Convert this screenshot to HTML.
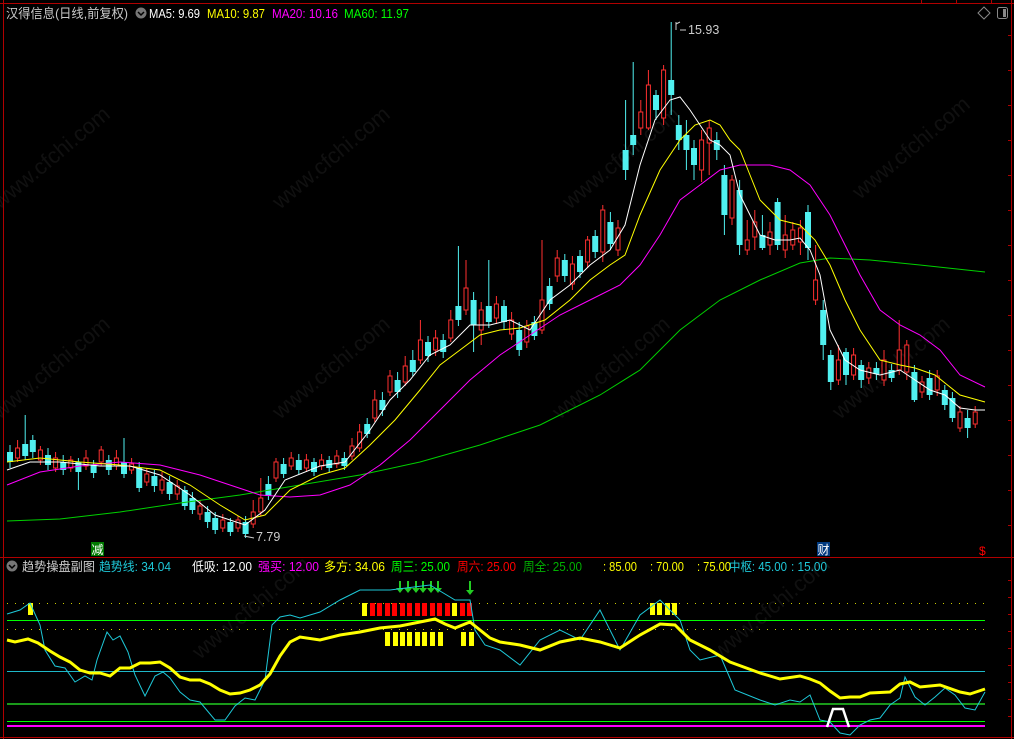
<!DOCTYPE html>
<html><head><meta charset="utf-8"><style>
html,body{margin:0;padding:0;background:#000;width:1014px;height:739px;overflow:hidden}
svg{display:block}
text{font-family:"Liberation Sans","Noto Sans CJK SC",sans-serif;font-size:12.5px}
</style></head><body>
<svg width="1014" height="739" xmlns="http://www.w3.org/2000/svg">
<rect width="1014" height="739" fill="#000"/>
<g fill="#101010">
<text x="0" y="210" transform="rotate(-40 0 210)" style="font-size:22px">www.cfchi.com</text>
<text x="280" y="210" transform="rotate(-40 280 210)" style="font-size:22px">www.cfchi.com</text>
<text x="570" y="210" transform="rotate(-40 570 210)" style="font-size:22px">www.cfchi.com</text>
<text x="860" y="200" transform="rotate(-40 860 200)" style="font-size:22px">www.cfchi.com</text>
<text x="0" y="420" transform="rotate(-40 0 420)" style="font-size:22px">www.cfchi.com</text>
<text x="280" y="420" transform="rotate(-40 280 420)" style="font-size:22px">www.cfchi.com</text>
<text x="560" y="420" transform="rotate(-40 560 420)" style="font-size:22px">www.cfchi.com</text>
<text x="840" y="420" transform="rotate(-40 840 420)" style="font-size:22px">www.cfchi.com</text>
<text x="200" y="660" transform="rotate(-40 200 660)" style="font-size:22px">www.cfchi.com</text>
<text x="720" y="660" transform="rotate(-40 720 660)" style="font-size:22px">www.cfchi.com</text>
</g>
<line x1="3.5" y1="0" x2="3.5" y2="739" stroke="#b00000"/>
<line x1="0" y1="3.5" x2="1014" y2="3.5" stroke="#b00000"/>
<line x1="1011.5" y1="0" x2="1011.5" y2="739" stroke="#b00000"/>
<line x1="0" y1="557.5" x2="1014" y2="557.5" stroke="#b00000"/>
<line x1="0" y1="737.5" x2="1014" y2="737.5" stroke="#b00000"/>
<path stroke="#b00000" d="M921.5 0V3M956.5 0V3M991.5 0V3M1008 35.5h3M1008 70.5h3M1008 105.5h3M1008 140.5h3M1008 175.5h3M1008 210.5h3M1008 245.5h3M1008 280.5h3M1008 315.5h3M1008 350.5h3M1008 385.5h3M1008 420.5h3M1008 455.5h3M1008 490.5h3M1008 525.5h3M1008 580.5h3M1008 597.5h3M1008 614.5h3M1008 631.5h3M1008 648.5h3M1008 665.5h3M1008 682.5h3M1008 699.5h3M1008 716.5h3"/>
<path d="M984 7 L990 13 L984 19 L978 13 Z" fill="none" stroke="#888"/>
<rect x="997.5" y="7.5" width="10" height="11" rx="2" fill="none" stroke="#888"/>
<rect x="1003" y="9" width="3" height="8" fill="#888"/>
<text x="6" y="18" fill="#c8c8c8" style="font-size:13px" textLength="122" lengthAdjust="spacingAndGlyphs">汉得信息(日线,前复权)</text>
<circle cx="141" cy="13" r="5.5" fill="#777"/><path d="M138 12 L141 15 L144 12" stroke="#000" stroke-width="1.5" fill="none"/>
<text x="149" y="18" fill="#fff" style="font-size:13px" textLength="51" lengthAdjust="spacingAndGlyphs">MA5: 9.69</text>
<text x="207" y="18" fill="#ff0" style="font-size:13px" textLength="58" lengthAdjust="spacingAndGlyphs">MA10: 9.87</text>
<text x="272" y="18" fill="#f0f" style="font-size:13px" textLength="66" lengthAdjust="spacingAndGlyphs">MA20: 10.16</text>
<text x="344" y="18" fill="#0f0" style="font-size:13px" textLength="65" lengthAdjust="spacingAndGlyphs">MA60: 11.97</text>

<g fill="#50f0f0" stroke="#50f0f0">
<path fill="none" d="M10 445V468M25.2 415V460M32.8 435V458M48 448V470M63.2 455V475M78.4 458V490M93.6 460V478M108.8 455V475M124 438V478M139.2 462V492M154.4 470V492M169.6 476V500M184.8 486V510M192.4 492V514M207.6 506V528M215.2 512V534M230.4 518V536M245.6 516V538M268.4 476V500M283.6 458V478M298.8 454V474M314 458V476M329.2 456V472M344.4 452V470M367.2 418V438M382.4 392V416M397.6 372V398M412.8 350V376M428 336V362M443.2 334V358M458.4 246V326M473.6 292V352M488.8 260V328M504 300V330M519.2 322V356M534.4 316V340M549.6 278V310M564.8 254V282M580 250V278M595.2 230V258M610.4 212V250M625.6 100V180M633.2 62V155M656 90V120M671.2 22V115M678.8 115V150M686.4 120V170M694 140V180M716.8 132V160M724.4 165V235M739.6 180V255M762.4 215V250M777.6 198V250M808 205V260M823.2 300V360M830.8 350V390M846 348V385M861.2 360V388M876.4 362V380M891.6 364V382M914.4 365V402M929.6 370V400M944.8 385V410M952.4 392V422M967.6 410V438"/>
<g stroke="none">
<rect x="7" y="452" width="6" height="10"/><rect x="22.2" y="444" width="6" height="12"/><rect x="29.8" y="440" width="6" height="12"/><rect x="45" y="455" width="6" height="10"/><rect x="60.2" y="462" width="6" height="8"/><rect x="75.4" y="462" width="6" height="10"/><rect x="90.6" y="465" width="6" height="8"/><rect x="105.8" y="460" width="6" height="10"/><rect x="121" y="462" width="6" height="12"/><rect x="136.2" y="468" width="6" height="20"/><rect x="151.4" y="476" width="6" height="10"/><rect x="166.6" y="482" width="6" height="12"/><rect x="181.8" y="490" width="6" height="16"/><rect x="189.4" y="498" width="6" height="12"/><rect x="204.6" y="512" width="6" height="10"/><rect x="212.2" y="518" width="6" height="12"/><rect x="227.4" y="522" width="6" height="10"/><rect x="242.6" y="522" width="6" height="12"/><rect x="265.4" y="484" width="6" height="12"/><rect x="280.6" y="464" width="6" height="10"/><rect x="295.8" y="460" width="6" height="10"/><rect x="311" y="462" width="6" height="10"/><rect x="326.2" y="460" width="6" height="8"/><rect x="341.4" y="458" width="6" height="8"/><rect x="364.2" y="424" width="6" height="10"/><rect x="379.4" y="400" width="6" height="10"/><rect x="394.6" y="380" width="6" height="12"/><rect x="409.8" y="360" width="6" height="12"/><rect x="425" y="342" width="6" height="14"/><rect x="440.2" y="340" width="6" height="12"/><rect x="455.4" y="306" width="6" height="14"/><rect x="470.6" y="300" width="6" height="25"/><rect x="485.8" y="306" width="6" height="16"/><rect x="501" y="306" width="6" height="16"/><rect x="516.2" y="330" width="6" height="20"/><rect x="531.4" y="322" width="6" height="14"/><rect x="546.6" y="286" width="6" height="18"/><rect x="561.8" y="260" width="6" height="16"/><rect x="577" y="256" width="6" height="16"/><rect x="592.2" y="236" width="6" height="16"/><rect x="607.4" y="222" width="6" height="22"/><rect x="622.6" y="150" width="6" height="20"/><rect x="630.2" y="135" width="6" height="10"/><rect x="653" y="95" width="6" height="15"/><rect x="668.2" y="80" width="6" height="15"/><rect x="675.8" y="125" width="6" height="15"/><rect x="683.4" y="135" width="6" height="15"/><rect x="691" y="148" width="6" height="17"/><rect x="713.8" y="140" width="6" height="10"/><rect x="721.4" y="175" width="6" height="40"/><rect x="736.6" y="190" width="6" height="55"/><rect x="759.4" y="235" width="6" height="13"/><rect x="774.6" y="202" width="6" height="43"/><rect x="805" y="212" width="6" height="36"/><rect x="820.2" y="310" width="6" height="35"/><rect x="827.8" y="355" width="6" height="27"/><rect x="843" y="352" width="6" height="23"/><rect x="858.2" y="365" width="6" height="15"/><rect x="873.4" y="368" width="6" height="6"/><rect x="888.6" y="370" width="6" height="8"/><rect x="911.4" y="372" width="6" height="28"/><rect x="926.6" y="378" width="6" height="17"/><rect x="941.8" y="390" width="6" height="15"/><rect x="949.4" y="398" width="6" height="20"/><rect x="964.6" y="418" width="6" height="10"/>
</g></g>
<g stroke="#ff3030">
<path fill="none" d="M17.6 440V462M40.4 446V465M55.6 452V472M70.8 456V472M86 450V470M101.2 446V466M116.4 450V470M131.6 458V474M146.8 468V486M162 472V494M177.2 480V500M200 500V520M222.8 514V532M238 516V532M253.2 500V528M260.8 478V516M276 458V482M291.2 452V470M306.4 454V472M321.6 454V470M336.8 450V468M352 438V460M359.6 424V452M374.8 390V422M390 370V396M405.2 356V386M420.4 320V364M435.6 330V356M450.8 310V342M466 260V315M481.2 302V345M496.4 296V324M511.6 312V340M526.8 320V348M542 240V334M557.2 250V282M572.4 256V290M587.6 236V268M602.8 205V262M618 220V256M640.8 100V135M648.4 70V130M663.6 65V125M701.6 130V182M709.2 120V175M732 175V225M747.2 220V255M754.8 210V250M770 222V255M785.2 215V258M792.8 222V250M800.4 220V255M815.6 245V305M838.4 345V385M853.6 348V380M868.8 362V384M884 350V386M899.2 320V375M906.8 340V380M922 376V398M937.2 370V396M960 406V432M975.2 406V428"/>
<g fill="#000">
<rect x="15.6" y="448" width="4" height="10"/><rect x="38.4" y="450" width="4" height="10"/><rect x="53.6" y="458" width="4" height="10"/><rect x="68.8" y="460" width="4" height="8"/><rect x="84" y="458" width="4" height="8"/><rect x="99.2" y="450" width="4" height="12"/><rect x="114.4" y="458" width="4" height="8"/><rect x="129.6" y="464" width="4" height="6"/><rect x="144.8" y="474" width="4" height="8"/><rect x="160" y="480" width="4" height="10"/><rect x="175.2" y="486" width="4" height="8"/><rect x="198" y="506" width="4" height="8"/><rect x="220.8" y="520" width="4" height="8"/><rect x="236" y="520" width="4" height="8"/><rect x="251.2" y="512" width="4" height="12"/><rect x="258.8" y="498" width="4" height="14"/><rect x="274" y="462" width="4" height="16"/><rect x="289.2" y="458" width="4" height="8"/><rect x="304.4" y="460" width="4" height="8"/><rect x="319.6" y="460" width="4" height="6"/><rect x="334.8" y="456" width="4" height="8"/><rect x="350" y="446" width="4" height="10"/><rect x="357.6" y="432" width="4" height="16"/><rect x="372.8" y="400" width="4" height="18"/><rect x="388" y="376" width="4" height="16"/><rect x="403.2" y="366" width="4" height="16"/><rect x="418.4" y="340" width="4" height="20"/><rect x="433.6" y="338" width="4" height="12"/><rect x="448.8" y="320" width="4" height="18"/><rect x="464" y="288" width="4" height="22"/><rect x="479.2" y="310" width="4" height="20"/><rect x="494.4" y="304" width="4" height="14"/><rect x="509.6" y="320" width="4" height="14"/><rect x="524.8" y="326" width="4" height="16"/><rect x="540" y="300" width="4" height="30"/><rect x="555.2" y="258" width="4" height="18"/><rect x="570.4" y="264" width="4" height="20"/><rect x="585.6" y="240" width="4" height="22"/><rect x="600.8" y="210" width="4" height="42"/><rect x="616" y="228" width="4" height="22"/><rect x="638.8" y="112" width="4" height="16"/><rect x="646.4" y="85" width="4" height="43"/><rect x="661.6" y="70" width="4" height="48"/><rect x="699.6" y="140" width="4" height="30"/><rect x="707.2" y="128" width="4" height="15"/><rect x="730" y="180" width="4" height="38"/><rect x="745.2" y="240" width="4" height="10"/><rect x="752.8" y="222" width="4" height="15"/><rect x="768" y="232" width="4" height="13"/><rect x="783.2" y="235" width="4" height="15"/><rect x="790.8" y="230" width="4" height="15"/><rect x="798.4" y="228" width="4" height="14"/><rect x="813.6" y="280" width="4" height="20"/><rect x="836.4" y="360" width="4" height="20"/><rect x="851.6" y="355" width="4" height="20"/><rect x="866.8" y="368" width="4" height="10"/><rect x="882" y="360" width="4" height="20"/><rect x="897.2" y="350" width="4" height="20"/><rect x="904.8" y="345" width="4" height="27"/><rect x="920" y="382" width="4" height="10"/><rect x="935.2" y="376" width="4" height="14"/><rect x="958" y="412" width="4" height="16"/><rect x="973.2" y="412" width="4" height="12"/>
</g></g>

<polyline fill="none" stroke="#00d000" points="7,521 60,519 120,512 180,503 240,495 300,485 360,475 420,462 480,445 540,425 600,395 640,370 680,330 720,300 760,280 800,263 830,258 870,260 920,265 985,272"/>
<polyline fill="none" stroke="#f0f" points="7,485 40,472 80,466 120,462 160,465 200,475 230,485 260,495 290,497 320,495 350,485 380,465 410,440 440,410 470,380 500,355 530,335 560,315 590,300 620,285 640,265 660,235 680,200 700,185 720,170 740,165 770,165 790,170 810,185 830,215 845,245 860,275 880,310 900,325 920,335 940,350 960,375 985,387"/>
<polyline fill="none" stroke="#ff0" points="7,462 40,458 80,462 120,465 160,470 190,485 220,505 245,520 265,515 290,490 320,475 345,468 370,445 395,420 420,390 440,365 460,350 480,335 500,330 520,328 545,320 570,300 590,280 610,265 625,255 640,215 660,170 680,140 695,125 710,120 720,125 730,140 740,150 750,175 760,200 780,220 800,225 815,240 830,265 845,300 860,330 880,360 900,365 915,368 935,375 960,395 985,402"/>
<polyline fill="none" stroke="#fff" points="7,470 30,462 60,462 100,466 130,466 160,475 190,495 215,515 245,525 265,510 285,480 320,466 345,462 370,430 390,400 410,380 430,355 450,345 470,325 490,325 510,320 530,330 550,300 570,285 590,265 610,250 625,225 640,165 655,120 670,100 680,97 690,110 700,125 710,140 720,145 730,155 740,195 750,215 760,235 775,240 790,240 800,238 810,250 820,275 830,330 845,360 860,370 880,375 900,370 915,380 930,390 945,395 960,408 975,410 985,410"/>

<path d="M676 22 L676 30 M676 24 L680 22 M680 30 L686 30" stroke="#ccc" fill="none"/>
<text x="688" y="34" fill="#ccc">15.93</text>
<path d="M244 536 L254 538" stroke="#ccc"/>
<text x="256" y="541" fill="#ccc">7.79</text>
<rect x="91" y="542" width="13" height="14" fill="#007a00"/><text x="91.5" y="554" fill="#fff" style="font-size:12px">减</text>
<rect x="817" y="542" width="13" height="14" fill="#003a80"/><text x="817.5" y="554" fill="#fff" style="font-size:12px">财</text>
<text x="979" y="555" fill="#f00" style="font-size:12px">$</text>

<circle cx="12" cy="566" r="5.5" fill="#777"/><path d="M9 565 L12 568 L15 565" stroke="#000" stroke-width="1.5" fill="none"/>
<text x="22" y="571" fill="#ccc" textLength="73" lengthAdjust="spacingAndGlyphs">趋势操盘副图</text>
<text x="99" y="571" fill="#1ec8d8" textLength="72" lengthAdjust="spacingAndGlyphs">趋势线: 34.04</text>
<text x="192" y="571" fill="#fff" textLength="60" lengthAdjust="spacingAndGlyphs">低吸: 12.00</text>
<text x="258" y="571" fill="#f0f" textLength="61" lengthAdjust="spacingAndGlyphs">强买: 12.00</text>
<text x="324" y="571" fill="#ff0" textLength="61" lengthAdjust="spacingAndGlyphs">多方: 34.06</text>
<text x="391" y="571" fill="#0f0" textLength="59" lengthAdjust="spacingAndGlyphs">周三: 25.00</text>
<text x="457" y="571" fill="#f00" textLength="59" lengthAdjust="spacingAndGlyphs">周六: 25.00</text>
<text x="523" y="571" fill="#00b000" textLength="59" lengthAdjust="spacingAndGlyphs">周全: 25.00</text>
<text x="603" y="571" fill="#ff0" textLength="34" lengthAdjust="spacingAndGlyphs">: 85.00</text>
<text x="650" y="571" fill="#ff0" textLength="34" lengthAdjust="spacingAndGlyphs">: 70.00</text>
<text x="697" y="571" fill="#ff0" textLength="34" lengthAdjust="spacingAndGlyphs">: 75.00</text>
<text x="729" y="571" fill="#1ec8d8" textLength="58" lengthAdjust="spacingAndGlyphs">中枢: 45.00</text>
<text x="791" y="571" fill="#1ec8d8" textLength="36" lengthAdjust="spacingAndGlyphs">: 15.00</text>

<line x1="7" y1="603.5" x2="985" y2="603.5" stroke="#cc0" stroke-dasharray="1,7"/>
<line x1="7" y1="629.5" x2="985" y2="629.5" stroke="#cc0" stroke-dasharray="1,7"/>
<line x1="7" y1="620.5" x2="985" y2="620.5" stroke="#0f0"/>
<line x1="7" y1="671.5" x2="985" y2="671.5" stroke="#1eb8c8"/>
<line x1="7" y1="704" x2="985" y2="704" stroke="#1a9a1a" stroke-width="2"/>
<line x1="7" y1="721.5" x2="985" y2="721.5" stroke="#0f0"/>
<line x1="7" y1="726" x2="985" y2="726" stroke="#f0f" stroke-width="2"/>

<g fill="#ff0">
<rect x="28" y="603" width="5" height="12"/>
<rect x="362" y="603" width="5" height="13"/><rect x="452" y="603" width="5" height="13"/>
<rect x="385" y="632" width="5" height="14"/><rect x="393" y="632" width="5" height="14"/><rect x="400" y="632" width="5" height="14"/><rect x="407" y="632" width="5" height="14"/><rect x="415" y="632" width="5" height="14"/><rect x="422" y="632" width="5" height="14"/><rect x="430" y="632" width="5" height="14"/><rect x="438" y="632" width="5" height="14"/><rect x="461" y="632" width="5" height="14"/><rect x="469" y="632" width="5" height="14"/>
<rect x="650" y="603" width="5" height="12"/><rect x="657" y="603" width="5" height="12"/><rect x="665" y="603" width="5" height="12"/><rect x="672" y="603" width="5" height="12"/>
</g>
<g fill="#f00">
<rect x="370" y="603" width="5" height="13"/><rect x="377" y="603" width="5" height="13"/><rect x="385" y="603" width="5" height="13"/><rect x="392" y="603" width="5" height="13"/><rect x="400" y="603" width="5" height="13"/><rect x="407" y="603" width="5" height="13"/><rect x="415" y="603" width="5" height="13"/><rect x="422" y="603" width="5" height="13"/><rect x="430" y="603" width="5" height="13"/><rect x="437" y="603" width="5" height="13"/><rect x="445" y="603" width="5" height="13"/><rect x="460" y="603" width="5" height="13"/><rect x="467" y="603" width="5" height="13"/>
</g>
<g fill="#2c2">
<path d="M399 581h2v7h3l-4 5l-4-5h3z"/><path d="M407 581h2v7h3l-4 5l-4-5h3z"/><path d="M415 581h2v7h3l-4 5l-4-5h3z"/><path d="M422 581h2v7h3l-4 5l-4-5h3z"/><path d="M430 581h2v7h3l-4 5l-4-5h3z"/><path d="M437 581h2v7h3l-4 5l-4-5h3z"/><path d="M469 581h2v9h3l-4 5l-4-5h3z"/>
</g>

<polyline fill="none" stroke="#1ec8d8" points="7,614 20,610 30,603 40,625 45,650 55,666 65,668 75,682 85,676 92,680 97,660 107,632 113,640 120,636 128,652 135,675 145,696 155,676 163,672 170,678 180,692 190,700 200,702 215,720 225,720 235,706 245,698 255,700 265,680 272,625 280,617 290,615 300,618 320,612 340,600 360,590 390,590 430,585 455,600 470,600 475,630 485,645 500,650 520,665 540,640 560,630 580,640 600,610 620,650 640,615 660,600 680,620 690,650 700,660 720,655 735,690 760,700 775,705 790,700 800,702 810,695 820,720 830,722 840,733 850,735 860,725 870,720 880,718 890,705 900,698 905,677 915,697 925,705 935,697 945,688 955,695 965,708 975,710 985,692"/>
<polyline fill="none" stroke="#ff0" stroke-width="3" points="7,640 15,642 28,639 38,643 50,651 60,657 70,662 80,670 90,673 100,673 110,676 120,668 130,668 140,663 150,663 160,662 170,668 180,677 190,680 200,680 210,684 220,690 230,694 240,693 250,690 260,685 270,674 280,656 290,642 300,637 320,640 340,635 360,632 380,628 400,626 420,622 435,619 445,624 455,628 470,622 480,630 490,638 500,642 520,645 540,650 560,642 580,638 600,642 620,648 640,635 660,624 675,625 690,640 710,650 730,662 760,673 780,679 800,676 810,679 820,683 830,691 840,698 850,697 860,697 870,693 890,692 900,684 910,682 920,687 940,685 960,692 970,694 985,689"/>
<path d="M827 727 L833 709 L843 709 L849 727" stroke="#fff" stroke-width="2.5" fill="none"/>
</svg>
</body></html>
